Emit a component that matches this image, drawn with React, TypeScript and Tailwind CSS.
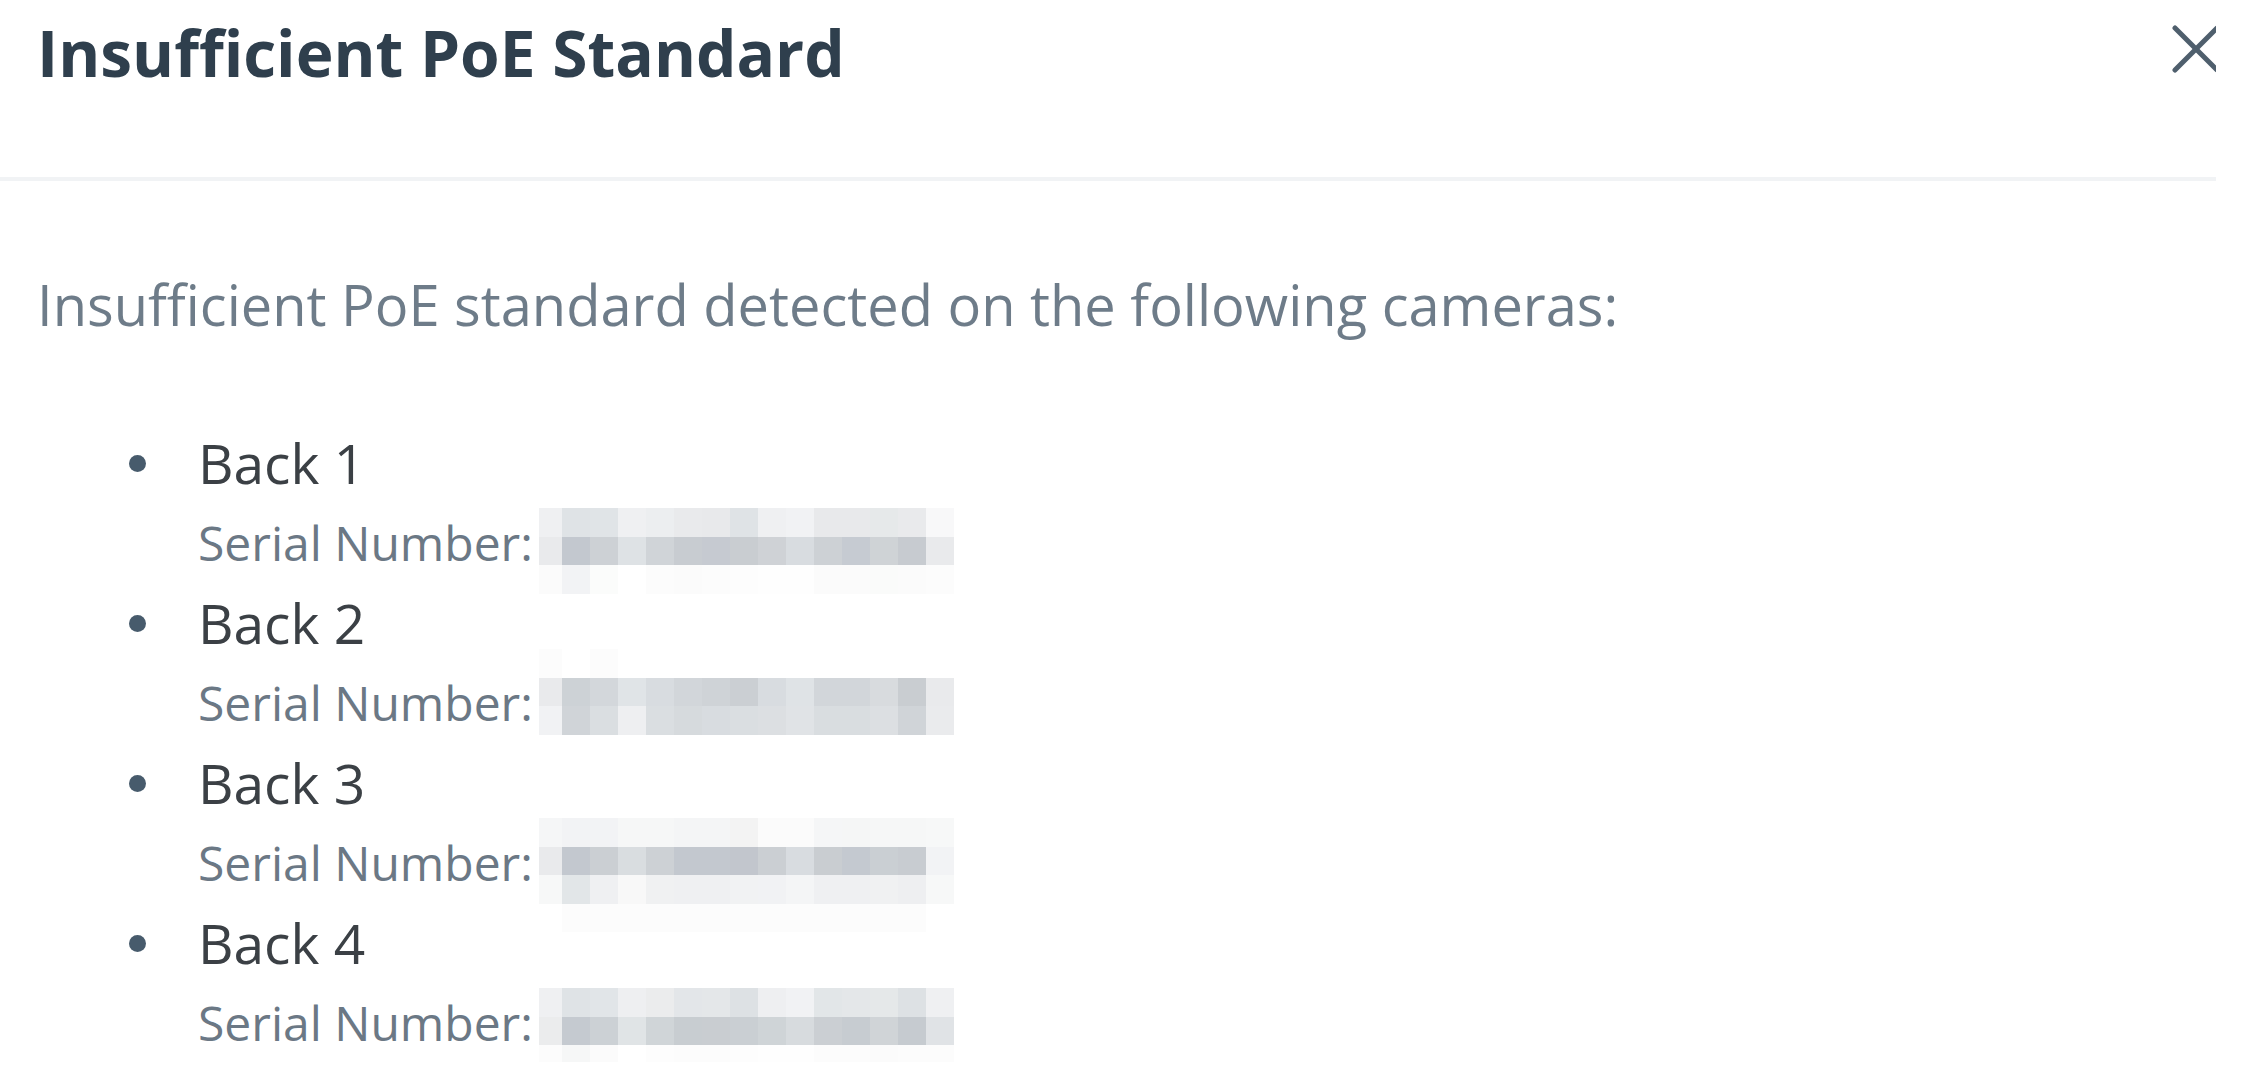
import React from "react";

type Serial = { mt: string; rows: string[][] };

const serials: Serial[] = [
  {
    mt: "mt-[4px]",
    rows: [
      ["#eff0f2", "#dfe3e6", "#e0e4e7", "#eff0f2", "#eceef0", "#e9eaec", "#e8e9eb", "#dfe3e6", "#eff0f2", "#f1f2f4", "#e8e9eb", "#e8e9eb", "#e6e9ea", "#e9eaec", "#f8f8f9"],
      ["#e9eaec", "#c3c8cf", "#cdd1d5", "#dee2e5", "#d0d4d8", "#c8ccd1", "#c6cad1", "#c9cdd1", "#cfd2d6", "#d8dce0", "#cdd1d5", "#c6cbd2", "#cfd3d6", "#c7cbd0", "#e9eaec"],
      ["#fbfbfb", "#f2f3f5", "#fbfcfb", "#ffffff", "#fcfcfc", "#fbfbfb", "#fcfcfc", "#fdfdfd", "#fefefe", "#fefefe", "#fbfbfb", "#fbfbfb", "#fafbfa", "#fbfbfb", "#fcfcfc"],
    ],
  },
  {
    mt: "mt-[-15px]",
    rows: [
      ["#fcfcfc", "#ffffff", "#fcfcfc", "#ffffff", "#ffffff", "#ffffff", "#ffffff", "#ffffff", "#ffffff", "#ffffff", "#ffffff", "#ffffff", "#ffffff", "#ffffff", "#ffffff"],
      ["#e9eaec", "#cdd2d6", "#d3d7db", "#e0e4e7", "#d8dce0", "#d2d6da", "#cfd3d7", "#cbcfd3", "#d8dce0", "#dfe3e6", "#d2d6da", "#d2d6da", "#d8dbde", "#c9cdd1", "#e9eaec"],
      ["#f1f2f4", "#d0d4d8", "#dadee1", "#eeeff1", "#dadee1", "#d6dadd", "#d8dce0", "#dadee1", "#dcdfe2", "#e0e3e6", "#d9dde0", "#d9dde0", "#dcdfe2", "#d0d4d8", "#eaebed"],
    ],
  },
  {
    mt: "mt-[-6px]",
    rows: [
      ["#f5f6f7", "#f2f3f5", "#f2f3f5", "#f6f7f7", "#f6f7f7", "#f4f5f6", "#f4f5f6", "#f3f3f3", "#fbfbfb", "#fbfbfb", "#f5f6f7", "#f5f6f6", "#f6f7f7", "#f6f7f7", "#f7f8f8"],
      ["#e9eaec", "#c3c8cf", "#cbcfd3", "#d9dde0", "#cdd1d5", "#c3c8cf", "#c3c8cf", "#c2c6cd", "#cbcfd3", "#d8dce0", "#c9cdd1", "#c4c9d0", "#cacfd3", "#c8ccd1", "#f2f3f5"],
      ["#f7f8f8", "#e2e6e8", "#eff0f2", "#f8f8f8", "#f0f1f2", "#eff0f2", "#eff0f2", "#f1f2f3", "#f1f2f4", "#f4f5f6", "#eff0f2", "#eff0f2", "#f0f1f2", "#eeeff1", "#f7f8f8"],
      ["#ffffff", "#fcfcfc", "#fcfcfc", "#fcfcfc", "#fcfcfc", "#fcfcfc", "#fcfcfc", "#fcfcfc", "#fcfcfc", "#fcfcfc", "#fcfcfc", "#fcfcfc", "#fcfcfc", "#fcfcfc", "#ffffff"],
    ],
  },
  {
    mt: "mt-[4px]",
    rows: [
      ["#eff0f2", "#dfe3e6", "#e1e5e8", "#eeeff1", "#ebeced", "#e3e6e9", "#e4e7e9", "#dde1e4", "#eeeff1", "#f1f2f4", "#e2e6e8", "#e4e7e9", "#e5e8e9", "#dde1e4", "#eff0f2"],
      ["#ebeced", "#c5cad0", "#ccd1d5", "#e0e4e6", "#d0d5d8", "#c8cdd1", "#c9cdd1", "#cacfd3", "#cfd4d7", "#d7dbde", "#cbcfd3", "#c7ccd1", "#d0d4d7", "#c6cbd0", "#e0e3e6"],
      ["#fcfcfc", "#f6f7f7", "#fbfbfb", "#ffffff", "#fdfdfd", "#fcfcfc", "#fcfcfc", "#fdfdfd", "#fefefe", "#fefefe", "#fcfcfc", "#fcfcfc", "#fbfbfb", "#fcfcfc", "#fcfcfc"],
    ],
  },
];

function Mosaic({ rows, mt }: { rows: string[][]; mt: string }) {
  return (
    <div className={`self-start ${mt} flex flex-col`}>
      {rows.map((row, i) => (
        <div key={i} className="flex h-[28.5px]">
          {row.map((c, j) => (
            <div
              key={j}
              className={j === 0 ? "w-[23px] h-full" : "w-[28px] h-full"}
              style={{ backgroundColor: c }}
            />
          ))}
        </div>
      ))}
    </div>
  );
}

export default function App() {
  return (
    <div className="w-[2246px] h-[1076px] overflow-hidden bg-white font-['Open_Sans',sans-serif]">
      <div className="w-[2216px] overflow-hidden">
        <div className="flex h-[177px] items-start justify-between pl-[37px] pt-[13px]">
          <h1 className="text-[64px] leading-[80px] font-bold text-[#2f3f4d]">
            Insufficient PoE Standard
          </h1>
          <svg
            className="mt-[12px] mr-[-4px] shrink-0"
            width="48"
            height="48"
            viewBox="0 0 48 48"
            fill="none"
            stroke="#4f5f6d"
            strokeWidth="5"
            strokeLinecap="round"
          >
            <line x1="3" y1="3" x2="45" y2="45" />
            <line x1="45" y1="3" x2="3" y2="45" />
          </svg>
        </div>
        <div className="h-[4px] bg-[#f1f3f5]" />
        <div className="pl-[37px] pt-[83px]">
          <p className="text-[56px] leading-[80px] text-[#6e7c89]">
            Insufficient PoE standard detected on the following cameras:
          </p>
          <div className="mt-[78px] flex flex-col">
            {serials.map((s, i) => (
              <div key={i} className="flex flex-col">
                <div className="flex h-[82px] items-center">
                  <span className="ml-[92px] h-[17px] w-[17px] rounded-full bg-[#475b6c]" />
                  <span className="ml-[52px] text-[55px] leading-[82px] text-[#3b4045]">
                    Back {i + 1}
                  </span>
                </div>
                <div className="flex h-[78px] items-center pl-[161px]">
                  <span className="w-[341px] shrink-0 text-[48px] leading-[78px] text-[#6b7885]">
                    Serial Number:
                  </span>
                  <Mosaic rows={s.rows} mt={s.mt} />
                </div>
              </div>
            ))}
          </div>
        </div>
      </div>
    </div>
  );
}
